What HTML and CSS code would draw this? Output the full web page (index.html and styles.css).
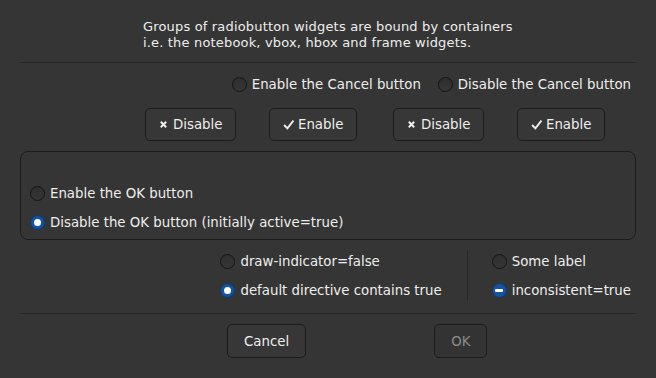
FILE: index.html
```html
<!DOCTYPE html>
<html lang="en">
<head>
  <meta charset="UTF-8" />
  <meta name="viewport" content="width=device-width, initial-scale=1.0"/>
  <title>Radio buttons</title>
  <link rel="stylesheet" href="styles.css">
</head>
<body>
  <div class="window">
    <p class="intro">
      Groups of radiobutton widgets are bound by containers<br>
      i.e. the notebook, vbox, hbox and frame widgets.
    </p>
    <div class="sep"></div>

    <div class="cancel-row">
      <label class="radio"><span class="dot"></span>Enable the Cancel button</label>
      <label class="radio"><span class="dot"></span>Disable the Cancel button</label>
    </div>

    <div class="toggle-buttons">
      <div class="cell"><button class="btn"><svg class="icon" viewBox="0 0 10 10"><path d="M2 2 L8 8 M8 2 L2 8" /></svg>Disable</button></div>
      <div class="cell"><button class="btn"><svg class="icon check" viewBox="0 0 10 10"><path d="M1 5.5 L4 8.5 L9.5 1.5" /></svg>Enable</button></div>
      <div class="cell"><button class="btn"><svg class="icon" viewBox="0 0 10 10"><path d="M2 2 L8 8 M8 2 L2 8" /></svg>Disable</button></div>
      <div class="cell"><button class="btn"><svg class="icon check" viewBox="0 0 10 10"><path d="M1 5.5 L4 8.5 L9.5 1.5" /></svg>Enable</button></div>
    </div>

    <div class="frame">
      <label class="radio"><span class="dot"></span>Enable the OK button</label>
      <label class="radio"><span class="dot checked"></span>Disable the OK button (initially active=true)</label>
    </div>

    <div class="bottom-row">
      <div class="col">
        <label class="radio"><span class="dot"></span>draw-indicator=false</label>
        <label class="radio"><span class="dot checked"></span>default directive contains true</label>
      </div>
      <div class="vsep"></div>
      <div class="col">
        <label class="radio"><span class="dot"></span>Some label</label>
        <label class="radio"><span class="dot mixed"></span>inconsistent=true</label>
      </div>
    </div>
    <div class="sep lower"></div>

    <div class="actions">
      <button class="btn action">Cancel</button>
      <button class="btn action" disabled>OK</button>
    </div>
  </div>
</body>
</html>
```

FILE: styles.css
```css
body {
  margin: 0;
  background: #353535;
  color: #eeeeec;
  font-family: 'DejaVu Sans', sans-serif;
  font-size: 13.33px;
}
.window {
  width: 656px;
  height: 378px;
  padding: 0 20px;
  box-sizing: border-box;
}
.intro {
  margin: 0;
  padding: 19px 0 0 123px;
  font-size: 13px;
  letter-spacing: 0.17px;
  line-height: 16px;
}
.sep {
  height: 1px;
  background: #282828;
  margin-top: 11px;
}
.sep.lower {
  margin-top: 13px;
}
.radio {
  display: flex;
  align-items: center;
  height: 20px;
}
.dot {
  width: 13px;
  height: 13px;
  border-radius: 50%;
  border: 1px solid #141414;
  background: linear-gradient(#2e2e2e, #363636);
  margin-right: 5px;
  margin-left: -1px;
  position: relative;
  flex: none;
}
.dot.checked,
.dot.mixed {
  background: #15539e;
  border-color: #0e3a70;
}
.dot.checked::after {
  content: '';
  position: absolute;
  left: 3px;
  top: 3px;
  width: 7px;
  height: 7px;
  border-radius: 50%;
  background: #ffffff;
}
.dot.mixed::after {
  content: '';
  position: absolute;
  left: 2.5px;
  top: 5px;
  width: 8px;
  height: 3px;
  border-radius: 1px;
  background: #ffffff;
}
.cancel-row {
  display: flex;
  justify-content: flex-end;
  gap: 18px;
  padding-right: 5px;
  margin-top: 11px;
}
.toggle-buttons {
  display: grid;
  grid-template-columns: repeat(4, 124px);
  margin: 14px 0 0 125px;
}
.btn {
  font: inherit;
  color: #eeeeec;
  background: #373737;
  border: 1px solid #1c1c1c;
  border-radius: 5px;
  height: 33px;
  padding: 0 13px;
  display: flex;
  align-items: center;
}
.icon {
  width: 9px;
  height: 9px;
  margin-right: 5px;
  fill: none;
  stroke: #eeeeec;
  stroke-width: 2.2;
}
.icon.check {
  width: 11px;
  height: 11px;
  margin-right: 4px;
  stroke-width: 1.8;
}
.frame {
  margin-top: 10px;
  height: 89px;
  box-sizing: border-box;
  border: 1px solid #1c1c1c;
  border-radius: 8px;
  padding: 31px 0 0 10px;
  display: flex;
  flex-direction: column;
  gap: 9px;
}
.bottom-row {
  display: flex;
  justify-content: flex-end;
  padding-right: 5px;
  margin-top: 11px;
}
.col {
  display: flex;
  flex-direction: column;
  gap: 9px;
}
.vsep {
  width: 1px;
  background: #282828;
  margin: 0 25px;
}
.actions {
  display: flex;
  gap: 128px;
  padding-left: 207px;
  margin-top: 10px;
}
.action {
  height: 34px;
  padding: 0 16px;
}
.btn:disabled {
  color: #8b8b8b;
  background: #333333;
}
```
